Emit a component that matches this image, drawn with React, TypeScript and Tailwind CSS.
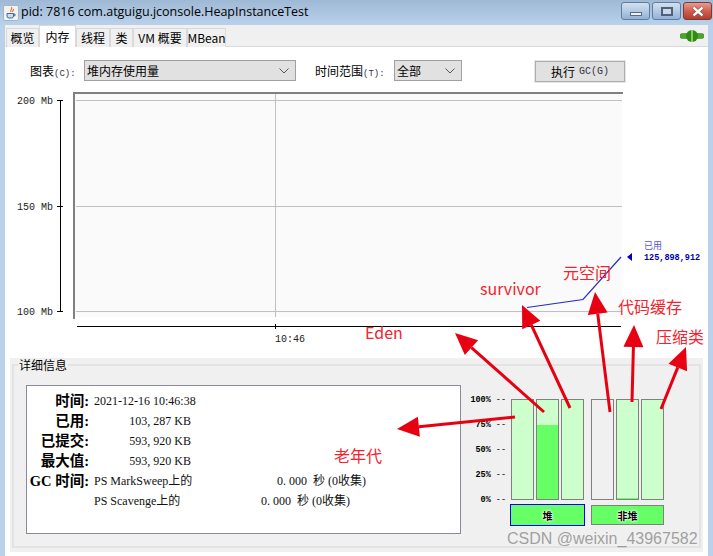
import React from "react";

const uiFont = "font-['Liberation_Mono','Noto_Sans_CJK_SC',monospace]";
const serifFont = "font-['Liberation_Serif','Noto_Sans_CJK_SC',serif]";
const cjkFont = "font-['Noto_Sans_CJK_SC','Liberation_Sans',sans-serif]";

const tabs = [
  { label: "概览", w: "w-[33px]" },
  { label: "内存", w: "w-[37px]", active: true },
  { label: "线程", w: "w-[34px]" },
  { label: "类", w: "w-[23px]" },
  { label: "VM 概要", w: "w-[54px]" },
  { label: "MBean", w: "w-[39px]" },
];

const arrows = [
  { from: [544, 412], to: [455, 333] },
  { from: [570, 408], to: [522, 305] },
  { from: [610, 412], to: [595, 292] },
  { from: [632, 402], to: [634, 325] },
  { from: [661, 409], to: [686, 347] },
  { from: [515, 417], to: [397, 429] },
];

const notes = [
  { text: "Eden", cls: "left-[365px] top-[322px]" },
  { text: "survivor", cls: "left-[480px] top-[278px]" },
  { text: "元空间", cls: "left-[563px] top-[262px]" },
  { text: "代码缓存", cls: "left-[618px] top-[296px]" },
  { text: "压缩类", cls: "left-[656px] top-[326px]" },
  { text: "老年代", cls: "left-[334px] top-[445px]" },
];

function ArrowMark({ from, to }: { from: number[]; to: number[] }) {
  const dx = to[0] - from[0];
  const dy = to[1] - from[1];
  const len = Math.hypot(dx, dy);
  const ux = dx / len;
  const uy = dy / len;
  const bx = to[0] - ux * 22;
  const by = to[1] - uy * 22;
  const head = `${to[0]},${to[1]} ${bx - uy * 10},${by + ux * 10} ${bx + uy * 10},${by - ux * 10}`;
  return (
    <g>
      <line x1={from[0]} y1={from[1]} x2={bx} y2={by} stroke="#e60012" strokeWidth="3" />
      <polygon points={head} fill="#e60012" />
    </g>
  );
}

function Chart() {
  const mono = { fontFamily: "'Liberation Mono', monospace" };
  return (
    <svg viewBox="0 0 703 268" className="block w-[703px] h-[268px]">
      <rect x="68" y="2" width="549" height="225" fill="#fafafa" />
      <path d="M69 229V3H618" fill="none" stroke="#808080" strokeWidth="2" />
      <g stroke="#c0c0c0">
        <path d="M71 10.5H617M71 116.5H617M71 221.5H617M270.5 4V227" fill="none" />
      </g>
      <g stroke="#000" fill="none">
        <path d="M55.5 10V221.5M52 10.5H58M52 116.5H58M52 221.5H58" />
        <path d="M72 236.5H616M270.5 234V239" />
      </g>
      <g fontSize="10" fill="#222" style={mono}>
        <text x="12" y="14">200 Mb</text>
        <text x="12" y="120">150 Mb</text>
        <text x="12" y="225">100 Mb</text>
        <text x="270" y="252">10:46</text>
      </g>
      <path d="M522 217.500L578 209.500L616 167" fill="none" stroke="#2a2ac8" strokeWidth="1.200" />
      <polygon points="622,167 627,163 627,171" fill="#0000c0" />
      <text x="639" y="159" fontSize="9" fill="#5555cc" style={{ fontFamily: "'Noto Sans CJK SC', sans-serif" }}>已用</text>
      <text x="639" y="170" fontSize="8.500" fontWeight="700" fill="#0000a8" style={mono}>125,898,912</text>
    </svg>
  );
}

function Bar({ fill = 0, empty = false }: { fill?: number; empty?: boolean }) {
  return (
    <div className={`w-[23px] h-[101px] border border-[#808080] flex flex-col justify-end ${empty ? "bg-[#f0f0f0]" : "bg-[#ccffcc]"}`}>
      <div className="bg-[#66ff66]" style={{ height: `${fill}%` }} />
    </div>
  );
}

function DetailRow({ label, children }: { label: string; children: React.ReactNode }) {
  return (
    <div className="flex items-center h-5">
      <div className={`w-[61px] text-right text-[14.500px] font-bold leading-5 text-black whitespace-nowrap ${serifFont}`}>{label}</div>
      <div className="pl-[5px] flex items-center text-[12px] leading-5 whitespace-nowrap">{children}</div>
    </div>
  );
}

export default function App() {
  return (
    <div className="relative w-[713px] h-[556px] overflow-hidden bg-[#b9d1ea] flex flex-col">
      {/* title bar */}
      <div className="h-[25px] shrink-0 flex items-center pl-[3px] pr-[1px] bg-gradient-to-b from-[#9fb9d5] to-[#b9d1ea]">
        <svg viewBox="0 0 16 16" className="w-4 h-4 shrink-0">
          <rect x="0.500" y="0.500" width="15" height="15" rx="1.500" fill="#f2f2f2" stroke="#a8b4c4" />
          <path d="M8.500 2c1.500 2-2 3-.5 5M10.500 4c.5 1.500-1.500 2-1 3" fill="none" stroke="#e07b1f" strokeWidth="1.200" />
          <path d="M4 8.500h6.500v2.500a2 2 0 0 1-2 2h-2.500a2 2 0 0 1-2-2zM10.500 9h1.500v1.800h-1.500" fill="#cfdcec" stroke="#3a6ea5" strokeWidth="1" />
        </svg>
        <span className="ml-[2px] text-[12.500px] text-black font-['Open_Sans','Noto_Sans',sans-serif] whitespace-nowrap">pid: 7816 com.atguigu.jconsole.HeapInstanceTest</span>
        <div className="ml-auto mb-[3px] flex gap-[2px]">
          <div className="w-[29px] h-[18px] rounded-[3px] border border-[#5d7ea3] bg-gradient-to-b from-[#d3e0ef] via-[#b4cae2] to-[#90b2d6] flex items-center justify-center">
            <div className="mt-[5px] w-[12px] h-[4px] bg-[#eef2f7] border border-[#5a6a80]" />
          </div>
          <div className="w-[29px] h-[18px] rounded-[3px] border border-[#5d7ea3] bg-gradient-to-b from-[#d3e0ef] via-[#b4cae2] to-[#90b2d6] flex items-center justify-center">
            <div className="w-[12px] h-[9px] bg-[#c9d8e8] border-2 border-[#50607a]" />
          </div>
          <div className="w-[29px] h-[18px] rounded-[3px] border border-[#7a3a3a] bg-gradient-to-b from-[#e79c8f] via-[#cf5f50] to-[#b23c2b] flex items-center justify-center">
            <svg viewBox="0 0 14 11" className="w-[14px] h-[11px]">
              <path d="M2.500 1.500l9 8M11.500 1.500l-9 8" stroke="#7a3030" strokeWidth="3.600" />
              <path d="M2.500 1.500l9 8M11.500 1.500l-9 8" stroke="#fff" strokeWidth="2.400" />
            </svg>
          </div>
        </div>
      </div>

      {/* window body */}
      <div className="mx-[5px] h-[531px] flex flex-col bg-white">
        <div className="h-[22px] shrink-0 bg-[#f0f0f0] border-b border-[#d9d9d9] flex items-end pl-[1px] pr-[4px]">
          {tabs.map((t) => (
            <div
              key={t.label}
              className={`${t.w} ${t.active ? "h-[22px] bg-white" : "h-[19px] bg-[#f0f0f0]"} -mb-px border border-b-0 border-[#d9d9d9] flex items-center justify-center text-[12px] text-black whitespace-nowrap ${cjkFont}`}
            >
              {t.label}
            </div>
          ))}
          <svg viewBox="0 0 24 12" className="ml-auto mb-[4px] w-[24px] h-[12px]">
            <rect x="0" y="3.500" width="24" height="5" rx="2" fill="#4ea52a" stroke="#2f7a14" strokeWidth="0.500" />
            <ellipse cx="12" cy="6" rx="6" ry="6" fill="#2f8a16" />
            <path d="M12 0v12" stroke="#a8e07a" strokeWidth="1.500" />
          </svg>
        </div>

        {/* controls */}
        <div className="h-[23px] mt-[13px] shrink-0 flex items-start text-[12px] text-black">
          <span className={`ml-[25px] w-[54px] leading-[21px] whitespace-nowrap ${cjkFont}`}>
            图表<span className={`${uiFont} text-[9px] text-[#334]`}>(C):</span>
          </span>
          <div className={`w-[212px] h-[21px] border border-[#a0a0a0] bg-[#e1e1e1] flex items-center justify-between pl-[2px] pr-[3px] ${cjkFont}`}>
            堆内存使用量
            <svg viewBox="0 0 10 6" className="w-[10px] h-[6px] mr-[3px]">
              <path d="M0.500 0.500L5 5L9.500 0.500" fill="none" stroke="#555" />
            </svg>
          </div>
          <span className={`ml-[19px] w-[79px] leading-[21px] whitespace-nowrap ${cjkFont}`}>
            时间范围<span className={`${uiFont} text-[9px] text-[#334]`}>(T):</span>
          </span>
          <div className={`w-[68px] h-[21px] border border-[#a0a0a0] bg-[#e1e1e1] flex items-center justify-between pl-[2px] pr-[3px] ${cjkFont}`}>
            全部
            <svg viewBox="0 0 10 6" className="w-[10px] h-[6px] mr-[3px]">
              <path d="M0.500 0.500L5 5L9.500 0.500" fill="none" stroke="#555" />
            </svg>
          </div>
          <div className={`ml-[73px] mt-[1px] w-[90px] h-[21px] border border-[#adadad] outline outline-1 outline-[#e6e6e6] bg-[#e1e1e1] flex items-center justify-center whitespace-nowrap ${cjkFont}`}>
            执行 <span className={`${uiFont} ml-1 text-[10px] text-[#334]`}>GC(G)</span>
          </div>
        </div>

        {/* chart */}
        <div className="mt-[7px] shrink-0">
          <Chart />
        </div>

        {/* details */}
        <div className="relative mt-0 h-[194px] mx-[5px] shrink-0 bg-[#f0f0f0] px-[2px] pt-[6px] pb-[4px]">
          <span className={`absolute left-[8px] top-[0px] px-[1px] bg-[#f0f0f0] text-[12px] leading-[14px] text-black ${cjkFont}`}>详细信息</span>
          <div className="h-full border-2 border-[#e3e3e3] pl-[12px] pt-[19px] flex">
            <div className={`w-[435px] h-[149px] border border-[#8a8a99] bg-white pt-[5px] pl-[1px] text-[#111] ${serifFont}`}>
              <DetailRow label="时间:">2021-12-16 10:46:38</DetailRow>
              <DetailRow label="已用:"><span className="w-[97px] text-right">103, 287 KB</span></DetailRow>
              <DetailRow label="已提交:"><span className="w-[97px] text-right">593, 920 KB</span></DetailRow>
              <DetailRow label="最大值:"><span className="w-[97px] text-right">593, 920 KB</span></DetailRow>
              <DetailRow label="GC 时间:">
                <span className="w-[183px]">PS MarkSweep上的</span>
                <span>0. 000&nbsp; 秒 (0收集)</span>
              </DetailRow>
              <DetailRow label="">
                <span className="w-[167px]">PS Scavenge上的</span>
                <span>0. 000&nbsp; 秒 (0收集)</span>
              </DetailRow>
            </div>

            {/* memory pool bars */}
            <div className="ml-[5px] mt-[11px] w-[40px] h-[109px] flex flex-col justify-between items-end">
              {["100%", "75%", "50%", "25%", "0%"].map((p) => (
                <div key={p} className={`flex items-center h-[9px] text-[8.500px] font-bold text-black ${uiFont}`}>
                  {p}<span className="ml-[5px] font-normal">--</span>
                </div>
              ))}
            </div>
            <div className="ml-[5px] mt-[14px] flex flex-col">
              <div className="flex">
                <div className="flex gap-[2px]">
                  <Bar />
                  <Bar fill={75} />
                  <Bar />
                </div>
                <div className="ml-[7px] flex gap-[2px]">
                  <Bar empty />
                  <Bar fill={1} />
                  <Bar />
                </div>
              </div>
              <div className="mt-[4px] flex">
                <div className={`-ml-[1px] w-[75px] h-[22px] border border-[#0000ff] bg-[#66ff66] flex items-center justify-center text-[10px] font-bold text-black [text-shadow:0_0_2px_#fff,0_0_2px_#fff,0_0_3px_#fff] ${cjkFont}`}>堆</div>
                <div className={`ml-[6px] mt-[1px] w-[73px] h-[20px] border border-[#808080] bg-[#66ff66] flex items-center justify-center text-[10px] font-bold text-black [text-shadow:0_0_2px_#fff,0_0_2px_#fff,0_0_3px_#fff] ${cjkFont}`}>非堆</div>
              </div>
            </div>
          </div>
        </div>
      </div>

      {/* hand-drawn annotations on top of the screenshot */}
      <svg viewBox="0 0 713 556" className="absolute inset-0 w-[713px] h-[556px] pointer-events-none">
        {arrows.map((a, i) => (
          <ArrowMark key={i} from={a.from} to={a.to} />
        ))}
      </svg>
      {notes.map((n) => (
        <span key={n.text} className={`absolute ${n.cls} text-[16px] leading-[20px] text-[#f5222d] whitespace-nowrap ${cjkFont}`}>
          {n.text}
        </span>
      ))}
      <span className="absolute left-[507px] top-[530px] text-[16px] leading-[18px] text-[#8a8a8a]/80 font-['Liberation_Sans',sans-serif] whitespace-nowrap">
        CSDN @weixin_43967582
      </span>
    </div>
  );
}
